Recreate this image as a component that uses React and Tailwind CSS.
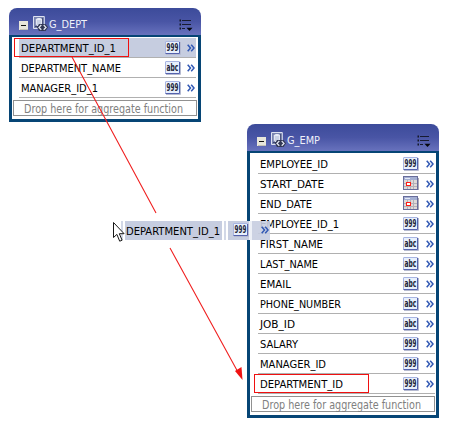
import React from 'react';
import clsx from 'clsx';

const deptFields = [
  { name: 'DEPARTMENT_ID_1', type: '999', width: 95, selected: true },
  { name: 'DEPARTMENT_NAME', type: 'abc', width: 100 },
  { name: 'MANAGER_ID_1', type: '999', width: 77 },
];

const empFields = [
  { name: 'EMPLOYEE_ID', type: '999', width: 68 },
  { name: 'START_DATE', type: 'date', width: 64 },
  { name: 'END_DATE', type: 'date', width: 52 },
  { name: 'EMPLOYEE_ID_1', type: '999', width: 79 },
  { name: 'FIRST_NAME', type: 'abc', width: 63 },
  { name: 'LAST_NAME', type: 'abc', width: 58 },
  { name: 'EMAIL', type: 'abc', width: 31 },
  { name: 'PHONE_NUMBER', type: 'abc', width: 81 },
  { name: 'JOB_ID', type: 'abc', width: 35 },
  { name: 'SALARY', type: '999', width: 38 },
  { name: 'MANAGER_ID', type: '999', width: 66 },
  { name: 'DEPARTMENT_ID', type: '999', width: 83 },
];

function Label({ children, width, className }) {
  return (
    <svg width={width + 2} height="16" className={clsx('block shrink-0 overflow-visible', className)}>
      <text x="0" y="12" textLength={width} lengthAdjust="spacingAndGlyphs" fill="currentColor">{children}</text>
    </svg>
  );
}

function TypeIcon({ type }) {
  if (type === 'date') {
    return (
      <svg width="16" height="15" viewBox="0 0 16 15" shapeRendering="crispEdges" className="block">
        <path d="M1 14h15V2h-1v11H1z" fill="#aaa9b7" />
        <rect x=".5" y=".5" width="14" height="13" fill="#dedad8" stroke="#686d9b" />
        <path d="M1 1h13v3H1z" fill="#a4afd2" />
        <path d="M2 2h5" stroke="#e5e9f5" />
        <path d="M1 7.5h13M1 10.5h13M4.5 4v9M7.5 4v9M10.5 4v9" stroke="#b4b0b6" />
        <rect x="3.5" y="6.5" width="4" height="3" fill="#fff" stroke="#ff1d15" />
      </svg>
    );
  }
  return (
    <svg width="16" height="14" viewBox="0 0 16 14" className="block overflow-visible">
      <path d="M1 13.5h14.5V1" fill="none" stroke="#b5bad0" />
      <rect x=".5" y=".5" width="14" height="12" rx=".5" fill="#e8f0fc" stroke="#a8b5e2" />
      <path d="M.5 12.5h14V1" fill="none" stroke="#5562ae" />
      <text
        x="1.6"
        y="10"
        textLength="11.8"
        lengthAdjust="spacingAndGlyphs"
        fontSize="10"
        fontWeight="700"
        fill="#202436"
      >
        {type}
      </text>
    </svg>
  );
}

function Chevrons() {
  return (
    <svg width="8" height="8" viewBox="0 0 8 8" className="block">
      <path d="M.7.7 3.5 4 .7 7.3M4.2.7 7 4 4.2 7.3" fill="none" stroke="#3158b4" strokeWidth="1.5" />
    </svg>
  );
}

function GroupIcon() {
  return (
    <svg width="15" height="16" viewBox="0 0 15 16" className="block">
      <path d="M.5.5h10.8v12H.5z" fill="#7883b0" stroke="#dde1f0" />
      <path d="M3.3 3v5.4c0 1.8 5.4 1.8 5.4 0V3" fill="#c8d0e5" stroke="#eef0fa" />
      <ellipse cx="6" cy="3" rx="2.7" ry="1" fill="#e9edf8" />
      <path d="M9.7 2v6M2 10.5h3" stroke="#3d456e" />
      <path d="M6 8h6.5l2.5 3.3-2.5 3.7H6l-2-3.7z" fill="#303653" />
      <path d="M8.3 9 6 11.4l2.3 2.4M10.7 9l2.3 2.4-2.3 2.4" fill="none" stroke="#e2e6f2" strokeWidth="1.3" />
    </svg>
  );
}

function MenuIcon() {
  return (
    <svg width="14" height="12" viewBox="0 0 14 12" className="block">
      <path d="M.5 1.5H2M.5 5.5H2M.5 9.5H2" stroke="#141827" strokeWidth="1.8" />
      <path d="M3 1.5h9M3 5.5h9M3 9.5h3" stroke="#171b31" strokeWidth="1.2" />
      <path d="M7.5 8.8h6l-3 3.2z" fill="#05070d" />
    </svg>
  );
}

function FieldRow({ field, iconClass }) {
  return (
    <div className={clsx('flex h-5 items-center border-b border-[#b0b0b0]', field.selected && 'bg-[#c6cde0]')}>
      <Label width={field.width} className="ml-[1.5px]">{field.name}</Label>
      <div className={clsx('ml-auto', iconClass)}><TypeIcon type={field.type} /></div>
      <div className="mr-px"><Chevrons /></div>
    </div>
  );
}

function GroupPanel({ title, titleWidth, fields, className, rowsClass, iconClass }) {
  return (
    <div className={clsx('absolute w-48', className)}>
      <div className="flex h-[27px] items-center rounded-t-[8px] bg-linear-to-b from-[#3c4b9a] via-[#4955a5] to-[#6872bd] pl-2.5">
        <svg width="9" height="9" viewBox="0 0 9 9" className="mt-[7px] block shrink-0" shapeRendering="crispEdges">
          <path d="M0 0h9v9H0z" fill="#e8e6db" />
          <path d="M1 8.5h8V1" fill="none" stroke="#c4c1b7" />
          <path d="M2 4.5h5" stroke="#111" strokeWidth="1" />
        </svg>
        <div className="ml-[5px] mt-[5px]"><GroupIcon /></div>
        <Label width={titleWidth} className="ml-px mt-[5px] text-[#eff1fa]">{title}</Label>
        <div className="ml-auto mr-[8px] mt-[6px]"><MenuIcon /></div>
      </div>
      <div className="border-x-[3px] border-b-[3px] border-t-2 border-[#064575] bg-white pb-[3px] pt-px">
        <div className={rowsClass}>
          {fields.map((field) => <FieldRow key={field.name} field={field} iconClass={iconClass} />)}
        </div>
        <div className="ml-px mt-[2px] flex h-4 w-[184px] items-center border border-[#919191] text-[11.5px] text-[#808080]">
          <Label width={159} className="ml-[10px] mt-[2px]">Drop here for aggregate function</Label>
        </div>
      </div>
    </div>
  );
}

function DragPreview() {
  return (
    <div className="absolute left-[121px] top-[221px] flex h-[19px]">
      <div className="w-[2px] bg-[#d2d8e7]" />
      <div className="ml-[2px] flex w-[97px] items-center bg-[#c6cde0]"><Label width={94} className="ml-px mt-px">DEPARTMENT_ID_1</Label></div>
      <div className="ml-[2px] w-[2px] bg-[#d2d8e7]" />
      <div className="ml-[2px] flex w-[21px] items-center justify-center bg-[#c6cde0] pb-px pl-[5px]"><TypeIcon type="999" /></div>
      <div className="w-[3px] bg-[#eef1f7]" />
      <div className="flex w-[18px] items-center justify-center bg-[#c6cde0]/90 pb-px pl-2"><Chevrons /></div>
    </div>
  );
}

export default function App() {
  return (
    <div className="relative h-[446px] w-[460px] overflow-hidden bg-white font-['DejaVu_Sans_Condensed','DejaVu_Sans',sans-serif] text-[11px] text-black">
      <GroupPanel
        title="G_DEPT"
        titleWidth={38}
        fields={deptFields}
        className="left-[9px] top-2"
        rowsClass="ml-[7px] mr-[2px]"
        iconClass="mr-[6px]"
      />
      <GroupPanel
        title="G_EMP"
        titleWidth={33}
        fields={empFields}
        className="left-[247px] top-[124px]"
        rowsClass="ml-2 mr-px"
        iconClass="mr-[7px]"
      />
      <DragPreview />

      {/* Linked columns */}
      <div className="absolute left-[14px] top-[38px] h-[19px] w-[115px] border border-[#f01010]" />
      <div className="absolute left-[254px] top-[374px] h-[19px] w-[115px] border border-[#f01010]" />
      <svg width="460" height="446" className="absolute left-0 top-0" fill="none">
        <path d="M72 57 156 213M170 248l69 126" stroke="#f02020" strokeWidth="1.1" />
        <path d="m242.5 380-1-13-6.5 4z" fill="#f01212" />
        <path d="M113.5 222.5v15l3.4-3.1 2.8 6.8 2.4-1-2.8-6.5h4.8z" fill="#fff" stroke="#171717" />
      </svg>
    </div>
  );
}
